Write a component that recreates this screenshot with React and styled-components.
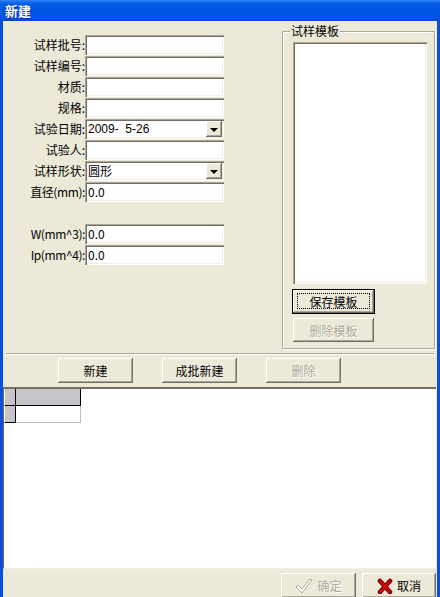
import React from "react";
import styled, { createGlobalStyle, css } from "styled-components";

const GlobalStyle = createGlobalStyle`
  html, body {
    margin: 0;
    padding: 0;
    background: #ece9d8;
  }
  body {
    font-family: "Noto Sans CJK SC", sans-serif;
    font-size: 12px;
    color: #000;
  }
`;

const Window = styled.div`
  width: 440px;
  height: 597px;
  display: flex;
  flex-direction: column;
  overflow: hidden;
`;

const TitleBar = styled.div`
  height: 21px;
  flex: none;
  display: flex;
  align-items: center;
  padding-left: 5px;
  background: linear-gradient(
    to bottom,
    #2f86f6 0%,
    #0a5fe8 15%,
    #0054e3 50%,
    #0057e8 85%,
    #0046c8 100%
  );
  color: #fff;
  font-weight: bold;
  font-size: 13px;
  line-height: 21px;
  text-shadow: 1px 1px #0b2a8a;
`;

const Frame = styled.div`
  flex: 1;
  display: flex;
  flex-direction: column;
  border-left: 3px solid #0a4de0;
  border-right: 3px solid #0a4de0;
  background: #ece9d8;
`;

const TopSection = styled.div`
  height: 330px;
  flex: none;
  box-sizing: border-box;
  padding: 10px 2px 0 0;
  display: flex;
  justify-content: space-between;
  align-items: flex-start;
`;

const Form = styled.div`
  display: flex;
  flex-direction: column;
  gap: 1px;
  padding-top: 4px;
`;

const Row = styled.div`
  display: flex;
  align-items: center;
  height: 20px;
  line-height: 20px;
  overflow: hidden;
`;

const Spacer = styled.div`
  height: 20px;
`;

const Label = styled.label`
  width: 82px;
  text-align: right;
  white-space: nowrap;
  font-size: 12px;
  line-height: 16px;
  letter-spacing: ${(p) => (p.$narrow ? "-0.4px" : "0")};
`;

const sunken = css`
  box-shadow: inset 1px 1px #aca899, inset 2px 2px #716f64,
    inset -1px -1px #fff, inset -2px -2px #f1efe2;
`;

const Field = styled.div`
  width: 139px;
  height: 20px;
  box-sizing: border-box;
  background: #fff;
  ${sunken};
  display: flex;
  align-items: center;
  justify-content: space-between;
  padding: 2px 2px 2px 3px;
  font-family: ${(p) =>
    p.$latin ? '"Liberation Sans", sans-serif' : '"Noto Sans CJK SC", sans-serif'};
  font-size: 12px;
  line-height: 16px;
  white-space: pre;
`;

const DropButton = styled.div`
  width: 16px;
  height: 16px;
  box-sizing: border-box;
  background: #ece9d8;
  box-shadow: inset -1px -1px #716f64, inset 1px 1px #fff,
    inset -2px -2px #aca899;
  display: flex;
  align-items: center;
  justify-content: center;

  &::before {
    content: "";
    border-left: 4px solid transparent;
    border-right: 4px solid transparent;
    border-top: 4px solid #000;
    margin-top: 1px;
  }
`;

const GroupBox = styled.div`
  position: relative;
  width: 153px;
  height: 318px;
  box-sizing: border-box;
  border: 1px solid #aca899;
  box-shadow: inset 1px 1px #fff, 1px 1px #fff;
  padding: 10px 0 0 10px;
  display: flex;
  flex-direction: column;
  align-items: flex-start;
`;

const Legend = styled.span`
  position: absolute;
  top: -8px;
  left: 7px;
  padding: 0 1px;
  background: #ece9d8;
  line-height: 14px;
  font-size: 12px;
`;

const ListBox = styled.div`
  width: 134px;
  height: 242px;
  box-sizing: border-box;
  background: #fff;
  ${sunken};
`;

const Button = styled.button`
  position: relative;
  width: ${(p) => p.$w || 75}px;
  height: ${(p) => p.$h || 25}px;
  margin: ${(p) => p.$m || "0"};
  box-sizing: border-box;
  padding: 0;
  border: none;
  background: #ece9d8;
  box-shadow: inset -1px -1px #716f64, inset 1px 1px #fff,
    inset -2px -2px #aca899;
  font-family: "Noto Sans CJK SC", sans-serif;
  font-size: 12px;
  color: #000;
  display: flex;
  align-items: center;
  justify-content: center;
  gap: 4px;

  ${(p) =>
    p.disabled &&
    css`
      color: #aca899;
      text-shadow: 1px 1px #fff;
    `}

  ${(p) =>
    p.$default &&
    css`
      border: 1px solid #000;
      &::after {
        content: "";
        position: absolute;
        inset: 3px 4px 4px 4px;
        border: 1px dotted #000;
      }
    `}
`;

const Separator = styled.div`
  height: 2px;
  margin: 2px 3px 0 3px;
  border-top: 1px solid #aca899;
  border-bottom: 1px solid #fff;
  box-sizing: border-box;
`;

const ButtonRow = styled.div`
  display: flex;
  gap: 29px;
  margin-top: 3px;
  padding-left: 55px;
`;

const Grid = styled.div`
  height: 182px;
  flex: none;
  margin: 4px 1px 0 0;
  box-sizing: border-box;
  background: #fff;
  border-top: 2px solid #716f64;
  border-left: 1px solid #716f64;
  border-bottom: 1px solid #f1efe2;
  display: grid;
  grid-template-columns: 12px 65px;
  grid-template-rows: 17px 17px;
  align-content: start;
`;

const Cell = styled.div`
  box-sizing: border-box;
  background: ${(p) => (p.$fixed ? "#c6c4c8" : "#fff")};
  border-right: 1px solid ${(p) => (p.$fixed ? "#000" : "#c0c0c0")};
  border-bottom: 1px solid ${(p) => (p.$fixed || p.$top ? "#000" : "#c0c0c0")};
  border-left: ${(p) => (p.$corner ? "1px solid #fff" : "none")};
`;

const Footer = styled.div`
  height: 28px;
  flex: none;
  display: flex;
  justify-content: flex-end;
  align-items: flex-start;
  gap: 6px;
  padding: 4px 1px 0 0;
  box-sizing: border-box;
`;

const CheckIcon = () => (
  <svg width="18" height="16" viewBox="0 0 18 16">
    <path
      d="M1 9 L3 7 L7 11 L15 1 L17 2 L7 15 Z"
      fill="#fff"
      stroke="#aca899"
      strokeWidth="1"
      strokeLinejoin="round"
    />
  </svg>
);

const CrossIcon = () => (
  <svg width="16" height="16" viewBox="0 0 16 16">
    <path d="M3 3 L13 14 M13 3 L3 14" stroke="#600" strokeWidth="4.5" strokeLinecap="round" />
    <path d="M3 3 L13 14 M13 3 L3 14" stroke="#d80000" strokeWidth="2.6" strokeLinecap="round" />
  </svg>
);

const fields = [
  { label: "试样批号:" },
  { label: "试样编号:" },
  { label: "材质:" },
  { label: "规格:" },
  { label: "试验日期:", value: "2009-  5-26", combo: true, latin: true },
  { label: "试验人:" },
  { label: "试样形状:", value: "圆形", combo: true },
  { label: "直径(mm):", value: "0.0", narrow: true },
];

export default function App() {
  return (
    <>
      <GlobalStyle />
      <Window>
        <TitleBar>新建</TitleBar>
        <Frame>
          <TopSection>
            <Form>
              {fields.map((f) => (
                <Row key={f.label}>
                  <Label $narrow={f.narrow}>{f.label}</Label>
                  <Field $latin={f.latin}>
                    <span>{f.value || ""}</span>
                    {f.combo && <DropButton />}
                  </Field>
                </Row>
              ))}
              <Spacer />
              <Row>
                <Label $narrow>W(mm^3):</Label>
                <Field>0.0</Field>
              </Row>
              <Row>
                <Label $narrow>Ip(mm^4):</Label>
                <Field>0.0</Field>
              </Row>
            </Form>
            <GroupBox>
              <Legend>试样模板</Legend>
              <ListBox />
              <Button $default $w={83} $h={25} $m="5px 0 0 -1px">
                保存模板
              </Button>
              <Button disabled $w={81} $h={24} $m="4px 0 0 0">
                删除模板
              </Button>
            </GroupBox>
          </TopSection>
          <Separator />
          <ButtonRow>
            <Button>新建</Button>
            <Button>成批新建</Button>
            <Button disabled>删除</Button>
          </ButtonRow>
          <Grid>
            <Cell $fixed $corner />
            <Cell $fixed />
            <Cell $fixed $corner />
            <Cell />
          </Grid>
          <Footer>
            <Button disabled>
              <CheckIcon />
              确定
            </Button>
            <Button $w={74}>
              <CrossIcon />
              取消
            </Button>
          </Footer>
        </Frame>
      </Window>
    </>
  );
}
